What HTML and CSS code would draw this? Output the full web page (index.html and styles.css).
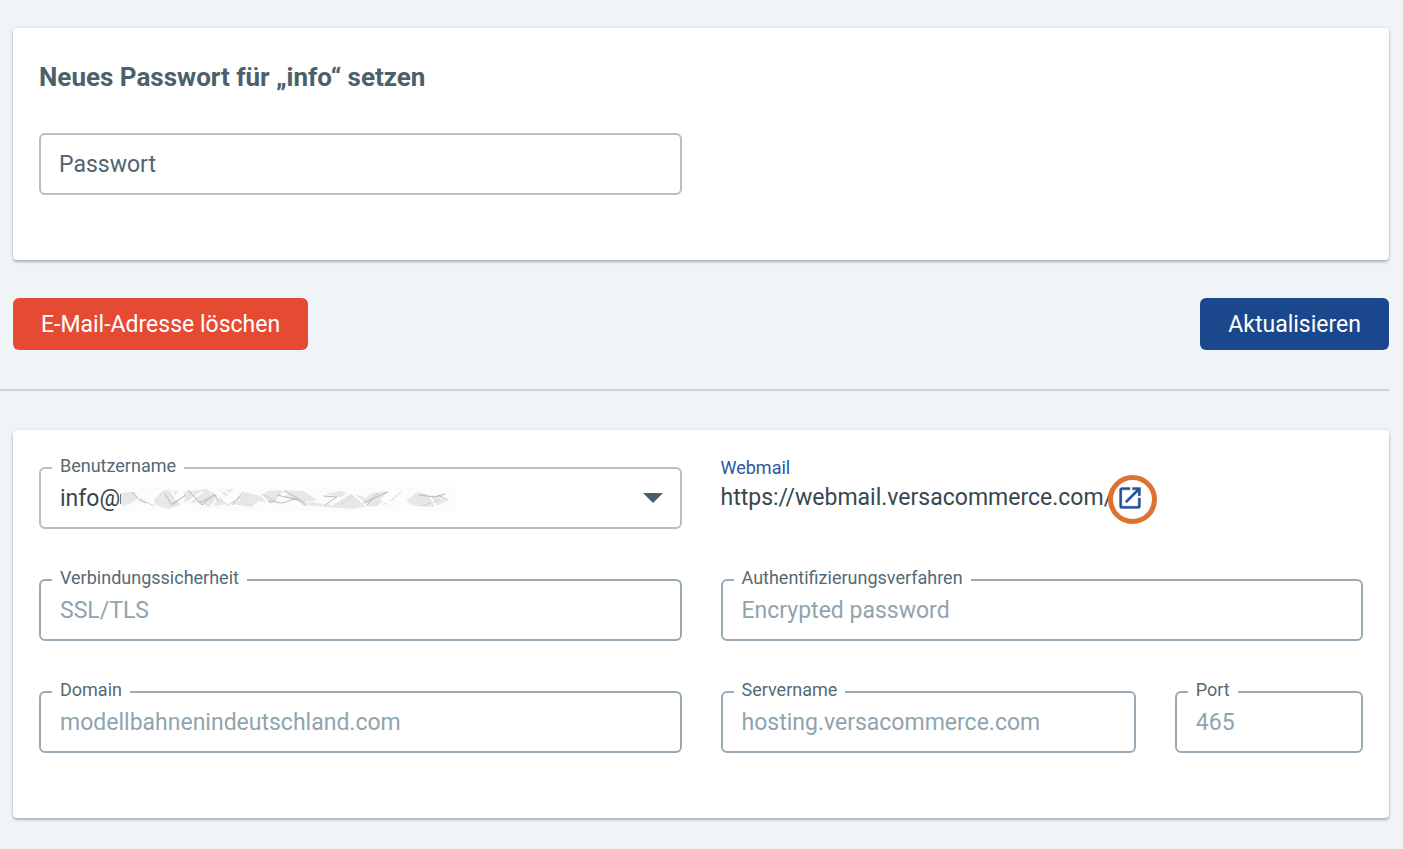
FILE: index.html
```html
<!DOCTYPE html>
<html lang="de">
<head>
<meta charset="utf-8">
<meta name="viewport" content="width=device-width, initial-scale=1">
<title>E-Mail-Adresse bearbeiten</title>
<link rel="stylesheet" href="styles.css">
</head>
<body>
<main class="page">
  <form class="password-form">
    <section class="card">
      <h1 class="card-title">Neues Passwort für „info“ setzen</h1>
      <div class="grid">
        <div class="field half">
          <input class="control control-light control-empty" type="password" placeholder="Passwort" aria-label="Passwort">
        </div>
      </div>
    </section>
    <div class="actions">
      <button class="button button-danger" type="button">E-Mail-Adresse löschen</button>
      <button class="button button-primary" type="submit">Aktualisieren</button>
    </div>
  </form>
  <hr class="divider">
  <section class="card card-settings">
    <div class="grid">
      <div class="field half">
        <select class="control control-light control-select" id="user">
          <option>info@</option>
        </select>
        <label class="field-label" for="user">Benutzername</label>
        <svg class="redaction" viewBox="0 0 336 24" aria-hidden="true">
          <path fill="#fcfcfc" d="M0 0h336v24H0z"/>
          <path fill="#e6e7e7" d="M1 6l14-1 3 5-6 6-11 3zM34 12l10-9 14 1-4 8 8 5-13 5-14-4zM64 5l22-3 13 7 8 8-18 3-12-5-12 2zM99 3l15-1-8 8zM112 17l13-12 16 4 7-5 16-1-11 15-14-4-8 6zM164 3l20 1 13 9-14 2-18-5zM178 17l14-2 16 3 14-7-16-4 14-3 22 5 10 9-19 4-27-2zM240 15l12-9 16-2-8 9 8 4-15 3zM286 14l11-9 18 4 12 5-13 6-19-1z"/>
          <path fill="none" stroke="#fff" stroke-width="2" d="M22 18l17-14M51 4l12 15 19-14M91 20l12-17 17 10M138 3l12 16 18-14M211 18l20-13 17 15M258 20l17-15 12 15M307 4l9 16"/>
          <path fill="none" stroke="#b9bbbc" d="M12 5l7 8 7 3M45 7l7 11 8-6M68 3l14 15 13-11M79 16l16-8 3 6M52 17l14-9M112 18l11-13M148 14l15 2 14-5M157 8l21 5 8 6M165 4l20 12M203 9l14 1-12 8M243 16l11-5 14-6M246 19l12-13M299 8l16 2 10-3M317 8l11 5"/>
          <path fill="none" stroke="#d0d2d3" d="M20 12l14 7M106 19l15-9M141 7l15 7M220 18l13-9M271 14l10-9M302 19l17-6"/>
          <path stroke="#777" d="M0.5 7v10"/>
        </svg>
        <svg class="caret" viewBox="0 0 20 10" aria-hidden="true"><path d="M0 0h20L10 10z"/></svg>
      </div>
      <div class="webmail half">
        <span class="webmail-label">Webmail</span>
        <div class="webmail-row">
          <span>https://webmail.versacommerce.com/</span>
          <a class="webmail-link" href="https://webmail.versacommerce.com/" aria-label="Webmail öffnen">
            <svg class="open-icon" viewBox="0 0 24 24" aria-hidden="true"><path d="M19 19H5V5h7V3H5c-1.110 0-2 .9-2 2v14c0 1.100.890 2 2 2h14c1.100 0 2-.9 2-2v-7h-2v7zM14 3v2h3.590l-9.830 9.830 1.410 1.410L19 6.410V10h2V3h-7z"/></svg>
            <span class="highlight-ring"></span>
          </a>
        </div>
      </div>
      <div class="field half">
        <input class="control" id="security" type="text" value="SSL/TLS" readonly>
        <label class="field-label" for="security">Verbindungssicherheit</label>
      </div>
      <div class="field half">
        <input class="control" id="auth" type="text" value="Encrypted password" readonly>
        <label class="field-label" for="auth">Authentifizierungsverfahren</label>
      </div>
      <div class="field half">
        <input class="control" id="domain" type="text" value="modellbahnenindeutschland.com" readonly>
        <label class="field-label" for="domain">Domain</label>
      </div>
      <div class="field third">
        <input class="control" id="server" type="text" value="hosting.versacommerce.com" readonly>
        <label class="field-label" for="server">Servername</label>
      </div>
      <div class="field sixth">
        <input class="control" id="port" type="text" value="465" readonly>
        <label class="field-label" for="port">Port</label>
      </div>
    </div>
  </section>
</main>
</body>
</html>
```
FILE: styles.css
```css
* {
  box-sizing: border-box;
}

body {
  margin: 0;
  background: #f0f4f7;
  color: #37474f;
  font-family: Roboto, "Liberation Sans", sans-serif;
  font-size: 23px;
}

.page {
  padding: 28px 14px 32px 13px;
}

.card {
  padding: 33px 26px 65px;
  background: #fff;
  border-radius: 4px;
  box-shadow: 0 2px 3px rgba(0, 0, 0, 0.26), 0 0 3px rgba(0, 0, 0, 0.1);
}

.card-settings {
  padding-top: 37px;
}

.card-title {
  margin: 0 0 40px;
  color: #4a606b;
  font-size: 26px;
  font-weight: 700;
  line-height: 32px;
}

.grid {
  display: grid;
  grid-template-columns: repeat(12, minmax(0, 1fr));
  column-gap: 39px;
  row-gap: 50px;
}

.half {
  grid-column: span 6;
}

.third {
  grid-column: span 4;
}

.sixth {
  grid-column: span 2;
}

.field {
  position: relative;
}

.control {
  display: block;
  width: 100%;
  height: 62px;
  padding: 0 19px;
  border: 2px solid #9aaab4;
  border-radius: 6px;
  background: #fff;
  color: #90a4ae;
  font: inherit;
  appearance: none;
}

.control-light {
  border-color: #b3c0c9;
}

.control-empty {
  padding: 0 18px;
}

.control-empty::placeholder {
  color: #4f646f;
  opacity: 1;
}

.control-select {
  color: #37474f;
}

.field-label {
  position: absolute;
  top: -12px;
  left: 13px;
  padding: 0 8px;
  background: #fff;
  color: #546a75;
  font-size: 18px;
  line-height: 22px;
}

.redaction {
  position: absolute;
  top: 20px;
  left: 81px;
  width: 336px;
  height: 24px;
  pointer-events: none;
}

.caret {
  position: absolute;
  top: 26px;
  right: 19px;
  width: 20px;
  height: 10px;
  fill: #455f6b;
  pointer-events: none;
}

.webmail {
  display: flex;
  flex-direction: column;
  margin-top: -12px;
}

.webmail-label {
  color: #2c56a3;
  font-size: 18px;
  line-height: 26px;
}

.webmail-row {
  display: flex;
  align-items: center;
  gap: 3px;
  line-height: 34px;
}

.webmail-link {
  display: flex;
  position: relative;
}

.open-icon {
  width: 28px;
  height: 28px;
  fill: #1f4f9c;
  stroke: #1f4f9c;
  stroke-width: 0.3;
}

.highlight-ring {
  position: absolute;
  top: -9px;
  left: -8px;
  width: 49px;
  height: 49px;
  border: 5px solid #de7230;
  border-radius: 50%;
}

.actions {
  display: flex;
  justify-content: space-between;
  padding: 38px 0 39px;
}

.button {
  height: 52px;
  padding: 0 28px;
  border: 0;
  border-radius: 6px;
  color: #fff;
  font: inherit;
}

.button-danger {
  background: #e54b32;
}

.button-primary {
  background: #1b488c;
}

.divider {
  height: 2px;
  margin: 0 0 39px -13px;
  border: 0;
  background: #cdd3d7;
}
```
